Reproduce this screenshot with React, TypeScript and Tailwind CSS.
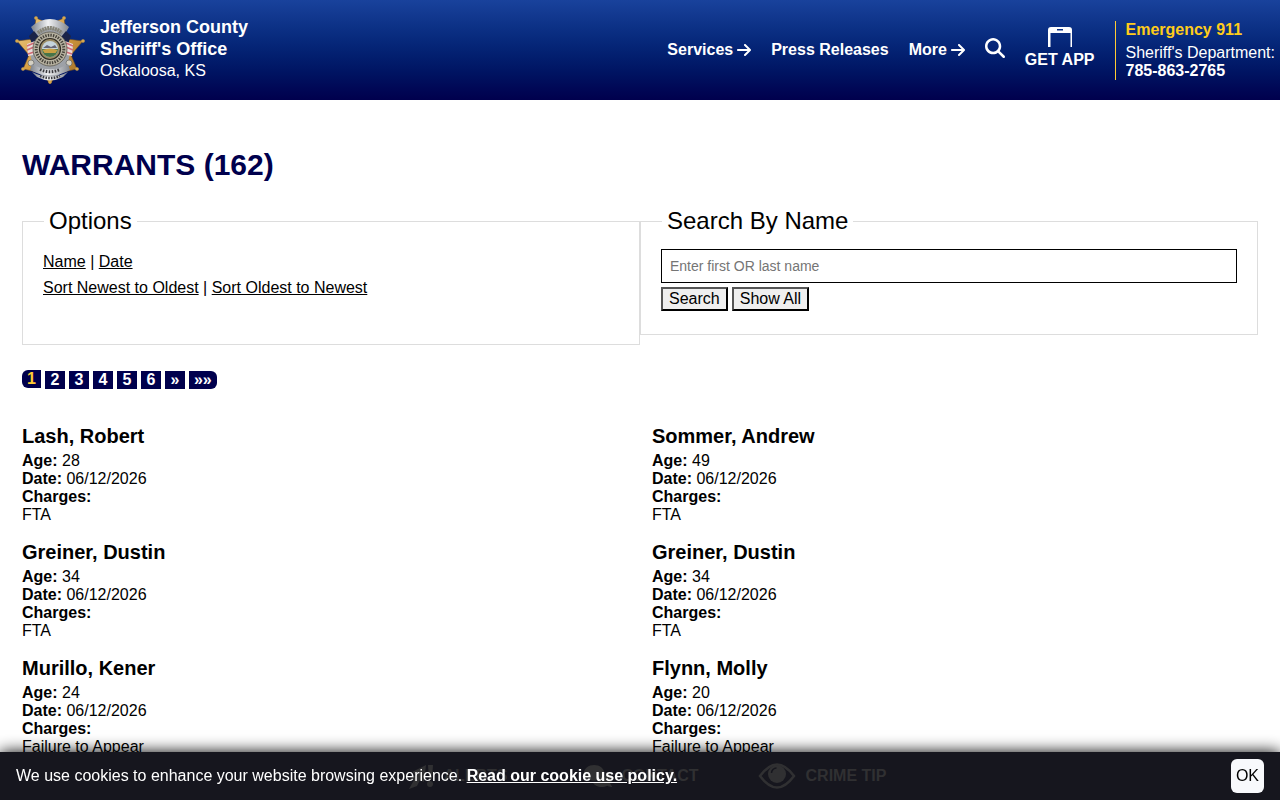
import React from "react";
import { FaComments } from "react-icons/fa";
import { FaArrowRight, FaMagnifyingGlass } from "react-icons/fa6";

const warrants = [
  { name: "Lash, Robert", age: 28, date: "06/12/2026", charges: "FTA" },
  { name: "Sommer, Andrew", age: 49, date: "06/12/2026", charges: "FTA" },
  { name: "Greiner, Dustin", age: 34, date: "06/12/2026", charges: "FTA" },
  { name: "Greiner, Dustin", age: 34, date: "06/12/2026", charges: "FTA" },
  { name: "Murillo, Kener", age: 24, date: "06/12/2026", charges: "Failure to Appear" },
  { name: "Flynn, Molly", age: 20, date: "06/12/2026", charges: "Failure to Appear" },
];

const pages = ["2", "3", "4", "5", "6", "»", "»»"];

function Badge() {
  return (
    <svg viewBox="0 0 72 70" className="h-[70px] w-[72px]" aria-hidden="true">
      <defs>
        <linearGradient id="gold" x1="0" y1="0" x2="1" y2="1">
          <stop offset="0" stopColor="#f0d08a" />
          <stop offset="0.5" stopColor="#d39a3f" />
          <stop offset="1" stopColor="#9a6a26" />
        </linearGradient>
        <linearGradient id="silver" x1="0" y1="0" x2="1" y2="0">
          <stop offset="0" stopColor="#7b818b" />
          <stop offset="0.45" stopColor="#f1f2f4" />
          <stop offset="1" stopColor="#83878e" />
        </linearGradient>
      </defs>
      <path
        d="M36 69L28 58L9 54L15 40L3 26L19 24L22 3L36 9L50 3L53 24L69 26L57 40L63 54L44 58Z"
        fill="url(#gold)"
        stroke="#6e4b1d"
        strokeWidth="0.6"
      />
      <g fill="#d7a74c">
        <circle cx="22" cy="3" r="1.800" />
        <circle cx="50" cy="3" r="1.800" />
        <circle cx="3" cy="26" r="1.800" />
        <circle cx="69" cy="26" r="1.800" />
        <circle cx="9" cy="54" r="1.800" />
        <circle cx="63" cy="54" r="1.800" />
        <circle cx="36" cy="67" r="1.800" />
      </g>
      <ellipse cx="36" cy="35" rx="20" ry="28" fill="#9da1a7" />
      <path d="M17 12Q36-4 55 12L51 19Q36 7 21 19Z" fill="url(#silver)" />
      <path d="M24 18Q36 8 48 18" fill="none" stroke="#858376" strokeWidth="4" strokeDasharray="2 0.6" />
      <path d="M15 21l5-5 5 6-7 7z" fill="#1a2348" />
      <path d="M57 21l-5-5-5 6 7 7z" fill="#1a2348" />
      <path d="M13 29l8-3-2 14-5 1z" fill="#e9dcdc" />
      <path d="M59 29l-8-3 2 14 5 1z" fill="#e9dcdc" />
      <path d="M13 31l7-3M13 35l7-3M14 39l6-2M59 31l-7-3M59 35l-7-3M58 39l-6-2" stroke="#cf6b75" strokeWidth="1.400" />
      <circle cx="36" cy="34" r="17" fill="#b9b4a3" stroke="#5c584d" strokeWidth="0.8" />
      <circle cx="36" cy="34" r="13.800" fill="none" stroke="#45423a" strokeWidth="3" strokeDasharray="1.400 1.200" />
      <circle cx="36" cy="34" r="10.500" fill="#9a8c66" stroke="#302c24" strokeWidth="1.200" />
      <circle cx="36" cy="34" r="8" fill="#c5d4dc" />
      <path d="M28 34h16a8 8 0 0 1-16 0z" fill="#477448" />
      <path d="M28.500 35q7.500-3 15 0l-2 3h-11z" fill="#c9a044" />
      <path d="M29 33l4-3 4 2 4-2 2 3z" fill="#667" />
      <circle cx="17" cy="48" r="3" fill="#d5d1c4" stroke="#555" strokeWidth="0.6" />
      <circle cx="55" cy="48" r="3" fill="#d5d1c4" stroke="#555" strokeWidth="0.6" />
      <path d="M18 49Q36 60 54 49L56 55Q36 66 16 55Z" fill="url(#silver)" />
      <path d="M18 57Q36 66 54 57L49 62Q36 69 23 62Z" fill="url(#silver)" />
      <path d="M26 54.500q10 4.500 20 0" fill="none" stroke="#3a3a3e" strokeWidth="3" strokeDasharray="1.600 1.400" />
      <path d="M26 61q10 4 20 0" fill="none" stroke="#3a3a3e" strokeWidth="2.400" strokeDasharray="1.500 1.300" />
    </svg>
  );
}

function PhoneIcon() {
  return (
    <svg viewBox="0 0 24 20" className="mb-[3px] h-5 w-6" aria-hidden="true">
      <path
        fill="#fff"
        fillRule="evenodd"
        d="M0 20V3a3 3 0 0 1 3-3h18a3 3 0 0 1 3 3v17h-1.500V6h-20v14zM9 2v1.500h6V2z"
      />
    </svg>
  );
}

function EyeIcon() {
  return (
    <svg viewBox="0 0 38 26" className="h-[26px] w-[38px]" aria-hidden="true">
      <path d="M2 13Q19-10 36 13Q19 36 2 13Z" fill="none" stroke="currentColor" strokeWidth="2.500" />
      <circle cx="19" cy="11" r="9" fill="currentColor" />
      <path d="M13.500 10a5 5 0 0 1 5-5" fill="none" stroke="#16161e" strokeWidth="1.500" />
    </svg>
  );
}

function AlertIcon() {
  return (
    <svg viewBox="0 0 26 26" className="h-[26px] w-[26px]" aria-hidden="true" fill="currentColor">
      <path d="M4 9L18 2l-2 17-4-2-3 6-8 3 5-9-4-1 6-4z" />
      <path d="M20 2h5l-1 14h-3z" />
      <circle cx="22" cy="21" r="3" />
    </svg>
  );
}

function Header() {
  return (
    <header className="flex h-[100px] items-center justify-between bg-linear-to-b from-[#19429c] to-[#00004d] pl-[14px] pr-[5px] text-white">
      <a href="#" className="flex items-center gap-[14px]">
        <Badge />
        <div className="pb-[2px] text-lg leading-[22px]">
          <p className="font-bold">Jefferson County</p>
          <p className="font-bold">Sheriff's Office</p>
          <p className="text-base leading-[22px]">Oskaloosa, KS</p>
        </div>
      </a>
      <div className="flex items-center">
        <nav className="flex items-center gap-5 font-bold">
          <a href="#" className="flex items-center gap-1">
            Services <FaArrowRight className="h-4 w-[14px]" />
          </a>
          <a href="#">Press Releases</a>
          <a href="#" className="flex items-center gap-1">
            More <FaArrowRight className="h-4 w-[14px]" />
          </a>
          <button aria-label="Search site" className="mb-1">
            <FaMagnifyingGlass className="size-5" />
          </button>
          <a href="#" className="flex flex-col items-center pb-[3px] leading-5">
            <PhoneIcon />
            <span>GET APP</span>
          </a>
        </nav>
        <div className="ml-5 border-l border-[#ffcc33] pl-[10px] leading-[18px]">
          <p className="mb-[5px] font-bold text-[#ffcc1a]">Emergency 911</p>
          <p>Sheriff's Department:</p>
          <p className="font-bold">785-863-2765</p>
        </div>
      </div>
    </header>
  );
}

function Filters() {
  return (
    <div className="flex items-start">
      <fieldset className="w-1/2 border border-[#ddd] px-5 pb-[43px] pt-[15px]">
        <legend className="ml-px px-[5px] text-2xl leading-[26px]">Options</legend>
        <div className="leading-[26px]">
          <p>
            <a href="#" className="underline">Name</a> | <a href="#" className="underline">Date</a>
          </p>
          <p>
            <a href="#" className="underline">Sort Newest to Oldest</a> |{" "}
            <a href="#" className="underline">Sort Oldest to Newest</a>
          </p>
        </div>
      </fieldset>
      <fieldset className="w-1/2 border border-[#ddd] px-5 pb-[23px] pt-[15px]">
        <legend className="ml-px px-[5px] text-2xl leading-[26px]">Search By Name</legend>
        <input
          type="text"
          aria-label="Enter first OR last name"
          placeholder="Enter first OR last name"
          className="block h-[34px] w-full border border-black px-2 text-sm placeholder:text-[#757575]"
        />
        <div className="mt-1 flex gap-1">
          <button className="h-6 border-2 border-black border-l-[#555] border-t-[#555] bg-[#efefef] px-[6px] leading-5">
            Search
          </button>
          <button className="h-6 border-2 border-black border-l-[#555] border-t-[#555] bg-[#efefef] px-[6px] leading-5">
            Show All
          </button>
        </div>
      </fieldset>
    </div>
  );
}

function Pagination() {
  return (
    <nav
      className="mt-[25px] flex items-start gap-1 text-center font-bold leading-[18px] text-white"
      aria-label="Pages"
    >
      <span className="rounded-l-md bg-[#00004d] px-[5px] text-[#ffcc33]">1</span>
      {pages.map((page) => (
        <a key={page} href="#" className="mt-px min-w-5 bg-[#00004d] px-[5px] last:rounded-r-md">
          {page}
        </a>
      ))}
    </nav>
  );
}

function BottomBar() {
  return (
    <div className="fixed inset-x-0 bottom-0 flex h-12 items-center justify-center gap-[59px] bg-[#16161e] pl-[14px] font-bold text-[#303032]">
      <a href="#" className="flex min-w-[117px] items-center gap-[10px]">
        <AlertIcon /> ALERTS
      </a>
      <a href="#" className="flex items-center gap-[10px]">
        <FaComments className="size-7" /> CONTACT
      </a>
      <a href="#" className="flex items-center gap-[10px]">
        <EyeIcon /> CRIME TIP
      </a>
    </div>
  );
}

function CookieNotice() {
  return (
    <div className="fixed inset-x-0 bottom-0 flex h-12 items-center justify-between px-4 text-white shadow-[0_0_15px_#000]">
      <p>
        We use cookies to enhance your website browsing experience.{" "}
        <a href="#" className="font-bold underline">Read our cookie use policy.</a>
      </p>
      <button className="h-[34px] rounded-md bg-[#f8f9fc] px-[5px] text-black">OK</button>
    </div>
  );
}

export default function App() {
  return (
    <div className="bg-white font-['Liberation_Sans',Arial,sans-serif] text-base text-black">
      <Header />
      <main className="px-[22px] pt-[47px]">
        <h1 className="mb-[25px] text-[30px] font-bold leading-9 text-[#00004d]">WARRANTS (162)</h1>
        <Filters />
        <Pagination />
        <section className="mt-[34px] grid grid-cols-2 gap-x-6 gap-y-[15px]">
          {warrants.map((warrant, i) => (
            <article key={i} className="leading-[18px]">
              <h2 className="mb-[3px] text-xl font-bold leading-[26px]">{warrant.name}</h2>
              <p><b>Age:</b> {warrant.age}</p>
              <p><b>Date:</b> {warrant.date}</p>
              <p><b>Charges:</b></p>
              <p>{warrant.charges}</p>
            </article>
          ))}
        </section>
      </main>
      <BottomBar />
      <CookieNotice />
    </div>
  );
}
